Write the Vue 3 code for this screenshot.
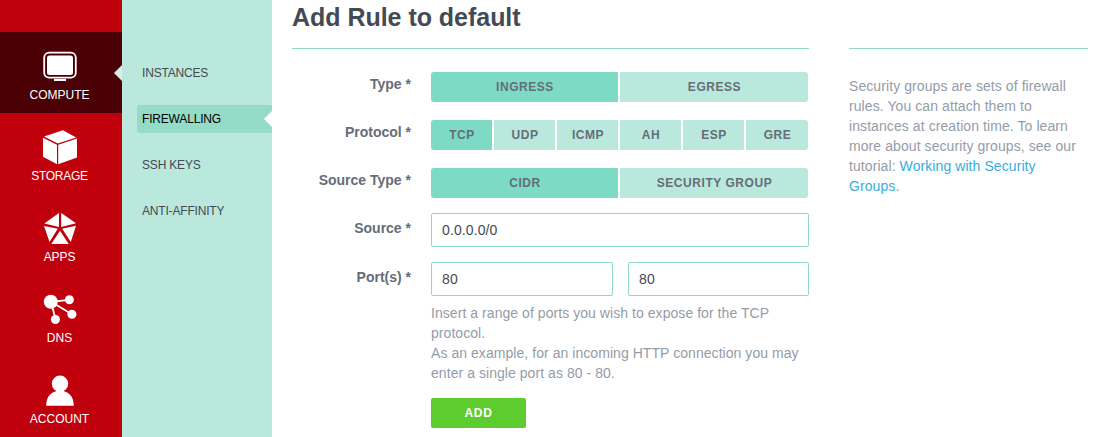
<script setup>
import { ref } from 'vue'

const sections = ['COMPUTE', 'STORAGE', 'APPS', 'DNS', 'ACCOUNT']
const pages = ['INSTANCES', 'FIREWALLING', 'SSH KEYS', 'ANTI-AFFINITY']
const choices = ref([
  { label: 'Type', options: ['INGRESS', 'EGRESS'], value: 'INGRESS' },
  { label: 'Protocol', options: ['TCP', 'UDP', 'ICMP', 'AH', 'ESP', 'GRE'], value: 'TCP' },
  { label: 'Source Type', options: ['CIDR', 'SECURITY GROUP'], value: 'CIDR' }
])
const source = ref('0.0.0.0/0')
const fromPort = ref('80')
const toPort = ref('80')
</script>

<template>
  <div class="app">
    <nav class="rail">
      <a v-for="name in sections" :key="name" class="section" :class="[name.toLowerCase(), { current: name === 'COMPUTE' }]">
        <svg class="icon" viewBox="0 0 36 36" width="36" height="36">
          <g v-if="name === 'COMPUTE'">
            <rect x="2.2" y="3.7" width="31.6" height="25" rx="5" fill="none" stroke="#fff" stroke-width="1.8" />
            <rect x="5" y="6.5" width="26" height="19.5" rx="2.5" fill="#fff" />
            <rect x="12" y="30" width="12" height="2" fill="#fff" />
          </g>
          <g v-else-if="name === 'STORAGE'" fill="#fff">
            <path d="M21 0.2 34.2 7.4 15.8 13.5 2 6.5Z" />
            <path d="M1 7.8 15 14.8V34.2L1 26.8Z" />
            <path d="M16.2 14.8 35 8.6V27.4L16.2 34.2Z" />
          </g>
          <g v-else-if="name === 'APPS'" fill="#fff">
            <path d="M17 2V16L2.3 12.5Z" />
            <path d="M19.2 2V16L34 12.3Z" />
            <path d="M2 15 15.8 17.8 7.5 31Z" />
            <path d="M34 14.8 20.2 17.8 28.8 31Z" />
            <path d="M18 19.8 26.7 32.9H9.3Z" />
          </g>
          <g v-else-if="name === 'DNS'" fill="#fff" stroke="#fff">
            <path d="M9 9.8 27.4 7.8M9 9.8 30 22.2M9 9.8 13.6 27.4" stroke-width="1.8" />
            <g stroke="none">
              <circle cx="8.8" cy="9.8" r="7" />
              <circle cx="27.4" cy="7.8" r="4.5" />
              <circle cx="29.9" cy="22.2" r="4.5" />
              <circle cx="13.4" cy="27.5" r="4.5" />
            </g>
          </g>
          <g v-else fill="#fff">
            <circle cx="18" cy="10.7" r="8.2" />
            <path d="M14 16H22V18.2C28 19.5 31.8 25 31.8 32.7H4.2C4.2 25 8 19.5 14 18.2Z" />
          </g>
        </svg>
        <span>{{ name }}</span>
      </a>
    </nav>

    <nav class="sub">
      <a v-for="page in pages" :key="page" class="page" :class="{ current: page === 'FIREWALLING' }">{{ page }}</a>
    </nav>

    <main class="content">
      <form class="form" @submit.prevent>
        <h1>Add Rule to default</h1>
        <div v-for="choice in choices" :key="choice.label" class="row">
          <label class="label">{{ choice.label }} *</label>
          <div class="group">
            <button
              v-for="option in choice.options"
              :key="option"
              type="button"
              class="option"
              :class="{ on: option === choice.value }"
              @click="choice.value = option"
            >{{ option }}</button>
          </div>
        </div>
        <div class="row source">
          <label class="label">Source *</label>
          <input v-model="source" class="input" type="text" />
        </div>
        <div class="row ports">
          <label class="label">Port(s) *</label>
          <div class="fields">
            <div class="pair">
              <input v-model="fromPort" class="input" type="text" />
              <input v-model="toPort" class="input" type="text" />
            </div>
            <p class="hint">Insert a range of ports you wish to expose for the TCP<br />protocol.<br />As an example, for an incoming HTTP connection you may<br />enter a single port as 80 - 80.</p>
            <button class="add" type="submit">ADD</button>
          </div>
        </div>
      </form>

      <aside class="help">
        <p>Security groups are sets of firewall<br />rules. You can attach them to<br />instances at creation time. To learn<br />more about security groups, see our<br />tutorial: <a>Working with Security<br />Groups.</a></p>
      </aside>
    </main>
  </div>
</template>

<style>
body {
  margin: 0;
  overflow: hidden;
}
</style>

<style scoped>
* {
  box-sizing: border-box;
}

.app {
  display: flex;
  height: 437px;
  overflow: hidden;
  background: #fff;
  font-family: "Liberation Sans", Arial, sans-serif;
  font-size: 14px;
  line-height: 20px;
  color: #434a54;
}

.rail {
  width: 122px;
  flex: none;
  padding-top: 32px;
  background: #c0000d;
}

.section {
  position: relative;
  display: flex;
  flex-direction: column;
  align-items: center;
  height: 81px;
  padding: 17px 3px 0 0;
  font-size: 12px;
  color: #fff;
}

.section.storage {
  letter-spacing: -0.3px;
}

.section.apps {
  letter-spacing: -0.1px;
}

.section .icon {
  flex: none;
  margin-left: 1px;
}

.section.current {
  background: #4b0006;
}

.section.current::after,
.page.current::after {
  content: "";
  position: absolute;
  right: 0;
  top: 33px;
  border: 8px solid transparent;
  border-left: 0;
  border-right-color: #dbece8;
}

.sub {
  width: 150px;
  flex: none;
  display: flex;
  flex-direction: column;
  gap: 18px;
  padding: 59px 0 0 15px;
  background: #bae8dc;
}

.page {
  position: relative;
  height: 28px;
  padding-left: 5px;
  border-radius: 3px 0 0 3px;
  font-size: 12px;
  line-height: 28px;
  letter-spacing: -0.18px;
  color: #434a54;
}

.page.current {
  background: #94dbc8;
  color: #000;
}

.page.current::after {
  top: 6px;
  border-right-color: #fff;
}

.content {
  display: flex;
  gap: 40px;
  padding-left: 20px;
}

.form {
  width: 517px;
}

h1 {
  height: 49px;
  margin: 0 0 23px;
  padding-top: 2px;
  border-bottom: 1px solid #8fdac6;
  font-size: 25px;
  line-height: 30px;
  letter-spacing: -0.03px;
}

.row {
  display: flex;
  gap: 20px;
  margin-bottom: 18px;
}

.label {
  width: 119px;
  flex: none;
  padding-top: 2px;
  text-align: right;
  font-weight: bold;
  color: #656d78;
}

.group {
  display: flex;
  gap: 2px;
  width: 377px;
  height: 30px;
  overflow: hidden;
  border-radius: 3px;
}

.option {
  flex: 1 1 0;
  min-width: 0;
  padding: 0;
  border: 0;
  background: #bae8dc;
  font: bold 12px/30px "Liberation Sans", Arial, sans-serif;
  letter-spacing: 0.55px;
  text-indent: 1px;
  color: #656d78;
}

.option:last-child {
  flex-basis: 1px;
}

.option.on {
  background: #7ddac5;
}

.source {
  margin: -3px 0 15px;
}

.source .label,
.ports .label {
  padding-top: 5px;
}

.ports {
  margin: 0;
}

.input {
  width: 100%;
  min-width: 0;
  height: 34px;
  padding: 0 10px;
  border: 1px solid #8fdac6;
  border-radius: 2px;
  background: #fff;
  font: 14px/20px "Liberation Sans", Arial, sans-serif;
  letter-spacing: 0.1px;
  color: #434a54;
  outline: 0;
}

.fields {
  flex: 1;
}

.pair {
  display: grid;
  grid-template-columns: 182px 181px;
  gap: 15px;
}

.hint {
  margin: 7px 0 15px;
  white-space: nowrap;
  letter-spacing: 0.055px;
  color: #959ca8;
}

.add {
  display: block;
  width: 95px;
  height: 30px;
  padding: 0;
  border: 0;
  border-radius: 2px;
  background: #5dcc2e;
  font: bold 12px/30px "Liberation Sans", Arial, sans-serif;
  letter-spacing: 0.6px;
  color: #fff;
}

.help {
  width: 239px;
  margin-top: 48px;
  border-top: 1px solid #8fdac6;
}

.help p {
  margin: 27px 0 0;
  white-space: nowrap;
  letter-spacing: 0.08px;
  color: #959ca8;
}

.help a {
  color: #37aedb;
}
</style>
